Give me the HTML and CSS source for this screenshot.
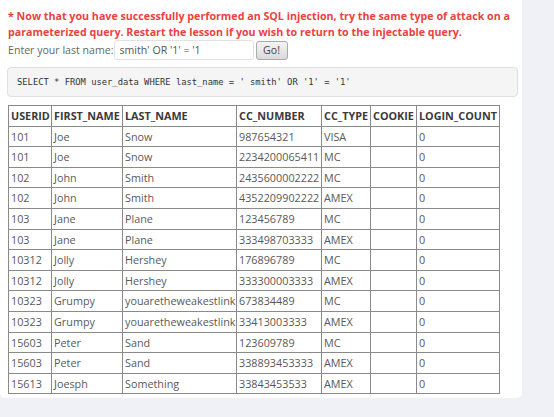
FILE: index.html
```html
<!DOCTYPE html>
<html>
<head>
<meta charset="utf-8">
<link rel="stylesheet" href="styles.css">
</head>
<body>
<div class="panel">
  <div class="feedback">* Now that you have successfully performed an SQL injection, try the same type of attack on a parameterized query. Restart the lesson if you wish to return to the injectable query.</div>
  <form class="form-row">
    <label class="label">Enter your last name:</label>
    <input class="name-input" type="text" value="smith' OR '1' = '1">
    <button class="go-btn" type="button">Go!</button>
  </form>
  <div class="query">SELECT * FROM user_data WHERE last_name = ' smith' OR '1' = '1'</div>
  <table class="results">
    <colgroup>
      <col class="c1"><col class="c2"><col class="c3"><col class="c4"><col class="c5"><col class="c6"><col class="c7">
    </colgroup>
    <tr><th>USERID</th><th>FIRST_NAME</th><th>LAST_NAME</th><th>CC_NUMBER</th><th>CC_TYPE</th><th>COOKIE</th><th>LOGIN_COUNT</th></tr>
    <tr><td>101</td><td>Joe</td><td>Snow</td><td>987654321</td><td>VISA</td><td></td><td>0</td></tr>
    <tr><td>101</td><td>Joe</td><td>Snow</td><td>2234200065411</td><td>MC</td><td></td><td>0</td></tr>
    <tr><td>102</td><td>John</td><td>Smith</td><td>2435600002222</td><td>MC</td><td></td><td>0</td></tr>
    <tr><td>102</td><td>John</td><td>Smith</td><td>4352209902222</td><td>AMEX</td><td></td><td>0</td></tr>
    <tr><td>103</td><td>Jane</td><td>Plane</td><td>123456789</td><td>MC</td><td></td><td>0</td></tr>
    <tr><td>103</td><td>Jane</td><td>Plane</td><td>333498703333</td><td>AMEX</td><td></td><td>0</td></tr>
    <tr><td>10312</td><td>Jolly</td><td>Hershey</td><td>176896789</td><td>MC</td><td></td><td>0</td></tr>
    <tr><td>10312</td><td>Jolly</td><td>Hershey</td><td>333300003333</td><td>AMEX</td><td></td><td>0</td></tr>
    <tr><td>10323</td><td>Grumpy</td><td>youaretheweakestlink</td><td>673834489</td><td>MC</td><td></td><td>0</td></tr>
    <tr><td>10323</td><td>Grumpy</td><td>youaretheweakestlink</td><td>33413003333</td><td>AMEX</td><td></td><td>0</td></tr>
    <tr><td>15603</td><td>Peter</td><td>Sand</td><td>123609789</td><td>MC</td><td></td><td>0</td></tr>
    <tr><td>15603</td><td>Peter</td><td>Sand</td><td>338893453333</td><td>AMEX</td><td></td><td>0</td></tr>
    <tr><td>15613</td><td>Joesph</td><td>Something</td><td>33843453533</td><td>AMEX</td><td></td><td>0</td></tr>
  </table>
</div>
</body>
</html>
```
FILE: styles.css
```css
html, body {
  margin: 0;
  padding: 0;
}
body {
  background: #eff1f6;
  font-family: "Open Sans", "Liberation Sans", sans-serif;
  width: 554px;
  height: 417px;
  overflow: hidden;
}
.panel {
  background: #fff;
  width: 514px;
  padding: 8px 0 4px 8px;
  border-radius: 0 0 5px 5px;
}
.feedback {
  color: #e8443f;
  font-weight: bold;
  font-size: 10.7px;
  line-height: 16px;
  width: 514px;
}
.form-row {
  display: flex;
  align-items: center;
  height: 20px;
  margin: 0;
}
.label {
  color: #666;
  font-size: 10.6px;
  margin-right: 0;
}
.name-input {
  box-sizing: border-box;
  width: 140px;
  height: 20px;
  border: 1px solid #e2e2e2;
  border-radius: 3px;
  padding: 0 5px;
  font-family: "Open Sans", sans-serif;
  font-size: 10.6px;
  color: #555;
  margin: 0 2px 0 0;
}
.go-btn {
  box-sizing: border-box;
  width: 32px;
  height: 19px;
  border: 1px solid #a9a9a9;
  border-radius: 3px;
  background: linear-gradient(#f4f4f4, #dadada);
  font-family: "Open Sans", sans-serif;
  font-size: 10.6px;
  color: #444;
  padding: 0;
}
.query {
  box-sizing: border-box;
  margin: 7px 0 0 -1px;
  width: 511px;
  height: 30px;
  background: #f5f5f5;
  border: 1px solid #e0e0e0;
  border-radius: 4px;
  padding: 0 9px;
  display: flex;
  align-items: center;
  font-family: "DejaVu Sans Mono", monospace;
  font-size: 8.8px;
  color: #333;
  white-space: pre;
}
.results {
  margin-top: 8px;
  border-collapse: collapse;
  table-layout: fixed;
  width: 491px;
  font-size: 10.8px;
}
.c1 { width: 43px; }
.c2 { width: 71px; }
.c3 { width: 114px; }
.c4 { width: 85px; }
.c5 { width: 49px; }
.c6 { width: 46px; }
.c7 { width: 83px; }
.results th, .results td {
  border: 1px solid #8a8a8a;
  padding: 2px 2px;
  height: 15.6px;
  line-height: 15.6px;
  text-align: left;
  white-space: nowrap;
  overflow: hidden;
}
.results th {
  color: #3a3a3a;
  font-weight: bold;
}
.results td {
  color: #595959;
}
```
